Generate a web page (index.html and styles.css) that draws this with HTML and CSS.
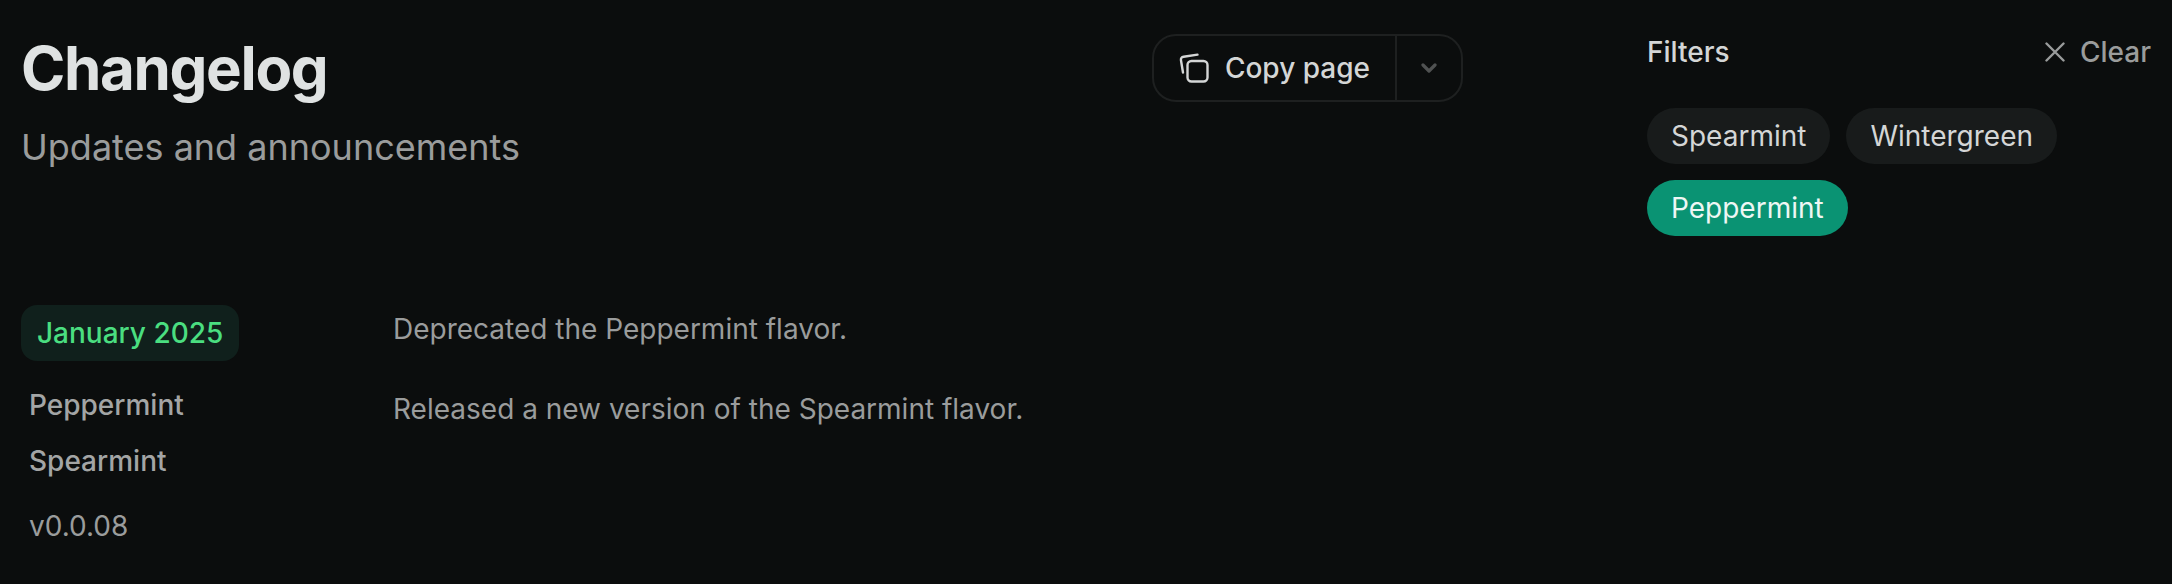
FILE: index.html
```html
<!DOCTYPE html>
<html lang="en">
<head>
    <meta charset="UTF-8">
    <title>Changelog</title>
    <link rel="stylesheet" href="styles.css">
</head>
<body>
    <div class="page">
        <main class="main">
            <header class="page-header">
                <div class="title-block">
                    <h1>Changelog</h1>
                    <p class="subtitle">Updates and announcements</p>
                </div>
                <div class="copy-group">
                    <button class="copy-btn" type="button">
                        <svg class="copy-icon" width="32" height="32" viewBox="0 0 32 32" fill="none" stroke="currentColor" stroke-width="2.4" stroke-linecap="round" stroke-linejoin="round">
                            <rect x="9.5" y="9" width="20" height="20.5" rx="4"/>
                            <path d="M5 20.5 3 8.5C2.6 6.2 3.6 5 5.6 4.7L19.5 2.6"/>
                        </svg>
                        <span>Copy page</span>
                    </button>
                    <button class="copy-more" type="button" aria-label="More">
                        <svg width="16" height="10" viewBox="0 0 16 10" fill="none" stroke="currentColor" stroke-width="3.2" stroke-linecap="round" stroke-linejoin="round">
                            <path d="M2 2l6 6 6-6"/>
                        </svg>
                    </button>
                </div>
            </header>

            <section class="timeline">
                <nav class="toc">
                    <a class="toc-month" href="#">January 2025</a>
                    <a class="toc-item" href="#">Peppermint</a>
                    <a class="toc-item" href="#">Spearmint</a>
                    <a class="toc-version" href="#">v0.0.08</a>
                </nav>
                <div class="entries">
                    <p>Deprecated the Peppermint flavor.</p>
                    <p>Released a new version of the Spearmint flavor.</p>
                </div>
            </section>
        </main>

        <aside class="filters">
            <div class="filters-head">
                <span class="filters-title">Filters</span>
                <button class="clear-btn" type="button">
                    <svg width="20" height="20" viewBox="0 0 20 20" fill="none" stroke="currentColor" stroke-width="2.4" stroke-linecap="round">
                        <path d="M1.5 1.5l17 17M18.5 1.5l-17 17"/>
                    </svg>
                    <span>Clear</span>
                </button>
            </div>
            <div class="chips">
                <span class="chip">Spearmint</span>
                <span class="chip">Wintergreen</span>
                <span class="chip chip-active">Peppermint</span>
            </div>
        </aside>
    </div>
</body>
</html>
```

FILE: styles.css
```css
* {
    margin: 0;
    padding: 0;
    box-sizing: border-box;
    font-family: Inter, "Liberation Sans", sans-serif;
}
body {
    background-color: #0b0d0d;
    overflow: hidden;
}
button {
    background: none;
    border: none;
    font-size: inherit;
    cursor: pointer;
}
a {
    text-decoration: none;
}
.page {
    display: flex;
    padding-left: 21px;
}
.main {
    width: 1442px;
}
.page-header {
    display: flex;
    justify-content: space-between;
    align-items: flex-start;
    height: 305px;
}
.title-block {
    padding-top: 32px;
}
h1 {
    font-size: 60px;
    line-height: 72px;
    font-weight: 700;
    letter-spacing: -1.35px;
    color: #dfe2e2;
}
.subtitle {
    margin-top: 15px;
    font-size: 36px;
    line-height: 56px;
    color: #9a9c9c;
}

/* copy button */
.copy-group {
    display: flex;
    height: 68px;
    margin-top: 34px;
    border: 2px solid #1e2020;
    border-radius: 24px;
}
.copy-btn {
    display: flex;
    align-items: center;
    gap: 15px;
    padding: 0 25px 0 24px;
    color: #d4d6d6;
    font-size: 28px;
    font-weight: 500;
    border-right: 2px solid #1e2020;
}
.copy-icon {
    flex: none;
}
.copy-more {
    display: flex;
    align-items: center;
    justify-content: center;
    width: 64px;
    color: #505252;
}

/* timeline */
.timeline {
    display: flex;
}
.toc {
    width: 372px;
    display: flex;
    flex-direction: column;
    align-items: flex-start;
    font-size: 28px;
}
.toc-month {
    height: 56px;
    line-height: 56px;
    padding: 0 16px;
    margin-bottom: 16px;
    border-radius: 16px;
    background-color: #10201c;
    color: #4ade80;
    font-weight: 500;
}
.toc-item {
    height: 56px;
    line-height: 56px;
    padding-left: 8px;
    color: #a3a5a5;
    font-weight: 500;
}
.toc-version {
    height: 56px;
    line-height: 56px;
    margin-top: 9px;
    padding-left: 8px;
    color: #9a9c9c;
}
.entries p {
    font-size: 28px;
    line-height: 48px;
    margin-bottom: 32px;
    color: #9a9c9c;
}

/* filters */
.filters {
    width: 504px;
    margin-left: 184px;
}
.filters-head {
    display: flex;
    justify-content: space-between;
    align-items: center;
    height: 40px;
    margin-top: 32px;
    margin-bottom: 36px;
    font-size: 28px;
    font-weight: 500;
}
.filters-title {
    color: #d4d6d6;
}
.clear-btn {
    display: flex;
    align-items: center;
    gap: 15px;
    color: #9a9c9c;
    font-weight: 500;
}
.chips {
    display: flex;
    flex-wrap: wrap;
    gap: 16px;
    width: 420px;
}
.chip {
    height: 56px;
    line-height: 56px;
    padding: 0 24px;
    border-radius: 28px;
    background-color: #181b1b;
    color: #d4d6d6;
    font-size: 28px;
}
.chip-active {
    background-color: #0a9373;
    color: #eef7f4;
}
```
